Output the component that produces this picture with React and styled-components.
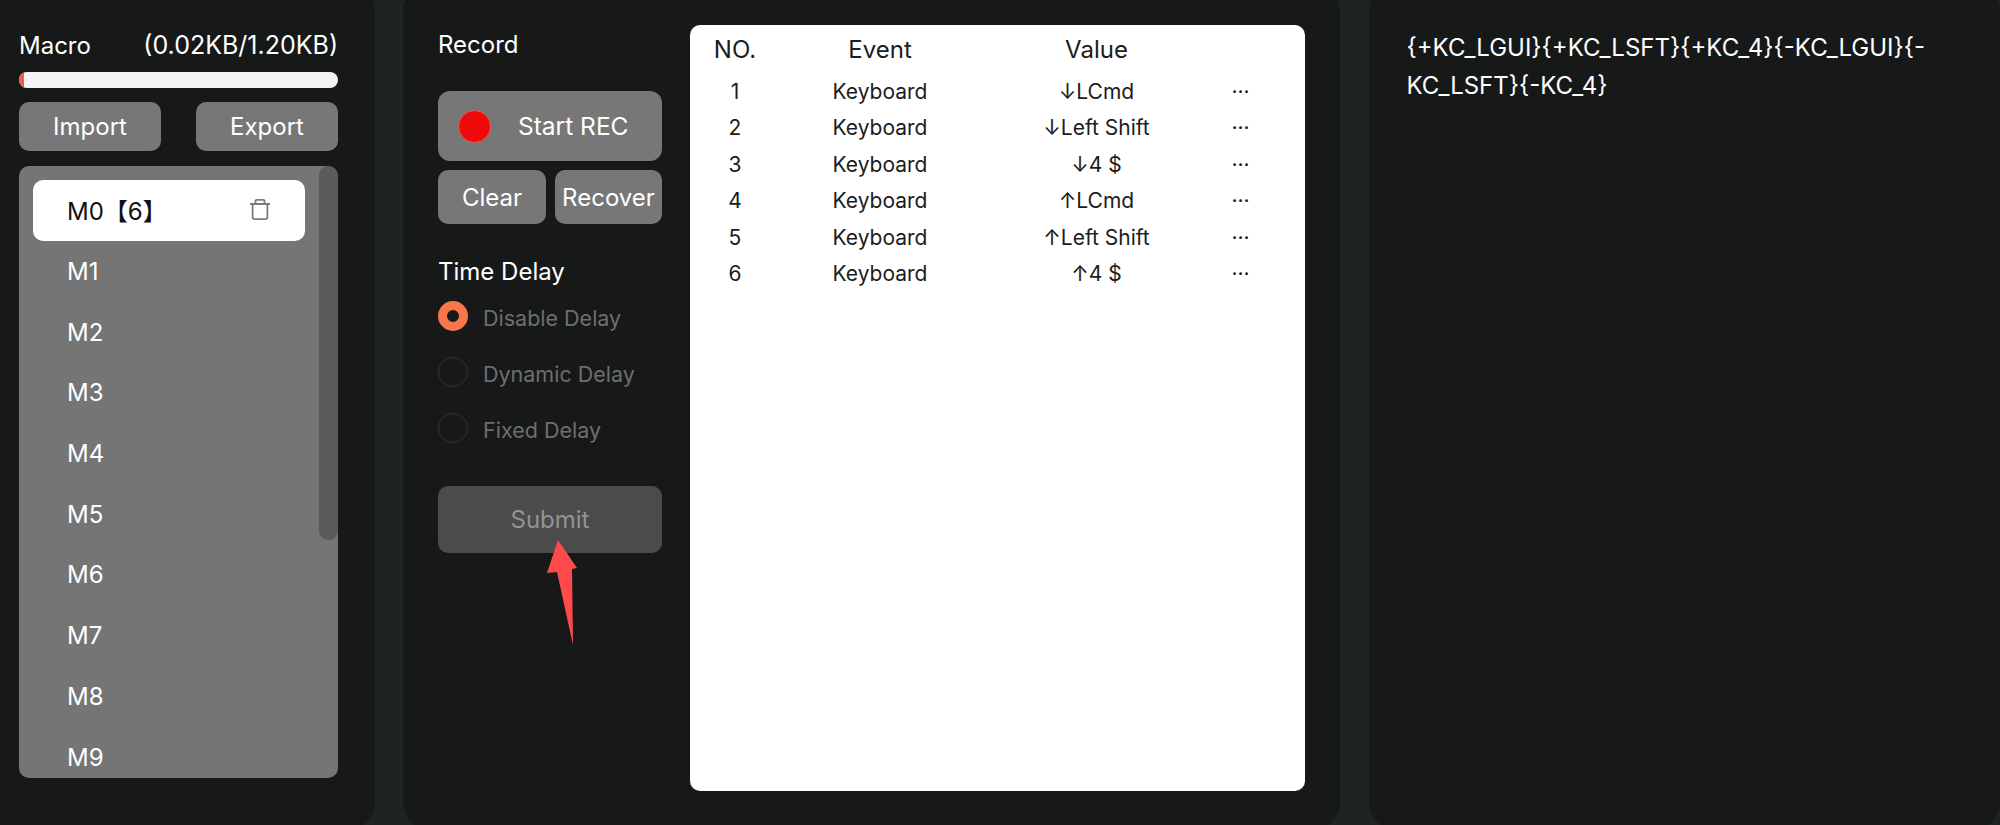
import React from "react";
import styled, { createGlobalStyle } from "styled-components";

const Global = createGlobalStyle`
  html, body { margin: 0; padding: 0; background: #1f2324; }
  body { font-family: Inter, "Noto Sans CJK SC", "Liberation Sans", sans-serif; }
  * { box-sizing: border-box; }
`;

const Page = styled.div`
  display: grid;
  grid-template-columns: 375px 937px 631px;
  column-gap: 28px;
  width: 2000px;
  height: 825px;
  overflow: hidden;
  background: #1f2324;
`;

const Panel = styled.section`
  height: 846px;
  margin-top: -16px;
  background: #171919;
  border-radius: 28px;
`;

const MacroPanel = styled(Panel)`
  display: flex;
  flex-direction: column;
  padding: 47px 37px 0 19px;
  border-top-left-radius: 0;
  border-bottom-left-radius: 0;
`;

const RecordPanel = styled(Panel)`
  display: flex;
  gap: 28px;
  padding: 41px 35px 0 35px;
`;

const OutputPanel = styled(Panel)`
  width: 631px;
  margin-left: 1px;
  padding: 45px 40px 0 37.5px;
  color: #fff;
  font-size: 24px;
  line-height: 37.5px;
`;

const Head = styled.div`
  display: flex;
  justify-content: space-between;
  align-items: baseline;
  height: 28px;
  line-height: 28px;
  font-size: 24px;
  color: #fff;
`;

const Usage = styled.span`
  font-size: 25px;
`;

const Bar = styled.div`
  flex: none;
  height: 15.5px;
  margin-top: 13px;
  background: #f4f4f4;
  border-radius: 8px;
  overflow: hidden;
`;

const BarFill = styled.div`
  height: 100%;
  background: #ea5f4b;
`;

const ButtonRow = styled.div`
  display: flex;
  justify-content: space-between;
  margin-top: 14.5px;
`;

const Button = styled.button`
  display: flex;
  align-items: center;
  justify-content: center;
  width: ${(p) => p.$w || "142px"};
  height: ${(p) => p.$h || "49px"};
  padding: 0;
  border: 0;
  border-radius: 10px;
  background: #777;
  color: #fff;
  font: 400 24px Inter, sans-serif;
`;

const List = styled.div`
  position: relative;
  flex: none;
  height: 612px;
  margin-top: 15px;
  padding-top: 14px;
  background: #757575;
  border-radius: 10px;
  overflow: hidden;
`;

const Scroll = styled.div`
  position: absolute;
  top: 0;
  right: 0;
  width: 19px;
  height: 374px;
  background: #5b5b5b;
  border-radius: 9px;
`;

const Item = styled.div`
  display: flex;
  align-items: center;
  justify-content: space-between;
  width: 272px;
  height: 60.7px;
  margin-left: 14px;
  padding: ${(p) => (p.$active ? "0 35px 2px 34px" : "1px 35px 0 34px")};
  border-radius: 10px;
  font-size: 24px;
  background: ${(p) => (p.$active ? "#fff" : "transparent")};
  color: ${(p) => (p.$active ? "#111" : "#fff")};
`;

const Controls = styled.div`
  flex: none;
  width: 224px;
  padding-top: 6px;
`;

const Heading = styled.div`
  height: 28px;
  line-height: 28px;
  font-size: 24px;
  color: #fff;
  margin-top: ${(p) => p.$mt || 0};
`;

const RecButton = styled(Button)`
  justify-content: flex-start;
  margin-top: 32px;
  padding-left: 20px;
  gap: 27px;
  border-radius: 12px;
  font-size: 24.5px;
`;

const RecDot = styled.span`
  width: 33px;
  height: 33px;
  border-radius: 50%;
  background: #ee0a0a;
  border: 1px solid #d8625c;
`;

const SplitRow = styled.div`
  display: flex;
  justify-content: space-between;
  margin-top: 9px;
`;

const Radios = styled.div`
  display: flex;
  flex-direction: column;
  gap: 26px;
  margin-top: 15px;
`;

const RadioRow = styled.label`
  display: flex;
  align-items: center;
  gap: 15px;
  height: 30px;
  font-size: 21.5px;
  color: #6e6e6e;
`;

const RadioMark = styled.span`
  flex: none;
  width: 30px;
  height: 30px;
  border-radius: 50%;
  border: ${(p) => (p.$on ? "9px solid #f9754c" : "1px solid #333")};
  background: ${(p) => (p.$on ? "#171919" : "transparent")};
`;

const RadioText = styled.span`
  padding-top: 4px;
`;

const SubmitWrap = styled.div`
  position: relative;
  margin-top: 43px;
`;

const Submit = styled(Button)`
  background: #4b4b4b;
  color: #939393;
  border-radius: 10px;
`;

const Arrow = styled.svg`
  position: absolute;
  left: 109px;
  top: 54px;
`;

const Table = styled.div`
  flex: none;
  width: 615px;
  height: 766px;
  background: #fff;
  border-radius: 10px;
  color: #1c1c1c;
`;

const Row = styled.div`
  display: grid;
  grid-template-columns: 90px 200px 233px 55px;
  align-items: center;
  justify-items: center;
  height: ${(p) => (p.$head ? "48px" : "36.5px")};
  font-size: ${(p) => (p.$head ? "24px" : "21px")};
`;

const Trash = () => (
  <svg width="20" height="21" viewBox="0 0 20 21" fill="none" stroke="#7c7c7c" strokeWidth="1.8">
    <path d="M5.5 5V2Q5.5 .9 6.7 .9H13.3Q14.5 .9 14.5 2V5" />
    <path d="M0 5H20" />
    <path d="M2.6 5V18Q2.6 20.1 4.8 20.1H15.2Q17.4 20.1 17.4 18V5" />
  </svg>
);

const rows = ["↓LCmd", "↓Left Shift", "↓4 $", "↑LCmd", "↑Left Shift", "↑4 $"];

export default function App() {
  return (
    <>
      <Global />
      <Page>
        <MacroPanel>
          <Head>
            <span>Macro</span>
            <Usage>(0.02KB/1.20KB)</Usage>
          </Head>
          <Bar>
            <BarFill style={{ width: `${(0.02 / 1.2) * 100}%` }} />
          </Bar>
          <ButtonRow>
            <Button>Import</Button>
            <Button>Export</Button>
          </ButtonRow>
          <List>
            <Item $active>
              <span>M0【6】</span>
              <Trash />
            </Item>
            {[1, 2, 3, 4, 5, 6, 7, 8, 9].map((n) => (
              <Item key={n}>M{n}</Item>
            ))}
            <Scroll />
          </List>
        </MacroPanel>
        <RecordPanel>
          <Controls>
            <Heading>Record</Heading>
            <RecButton $w="224px" $h="70px">
              <RecDot />
              Start REC
            </RecButton>
            <SplitRow>
              <Button $w="108px" $h="54px">Clear</Button>
              <Button $w="107px" $h="54px">Recover</Button>
            </SplitRow>
            <Heading $mt="34px">Time Delay</Heading>
            <Radios>
              <RadioRow><RadioMark $on /><RadioText>Disable Delay</RadioText></RadioRow>
              <RadioRow><RadioMark /><RadioText>Dynamic Delay</RadioText></RadioRow>
              <RadioRow><RadioMark /><RadioText>Fixed Delay</RadioText></RadioRow>
            </Radios>
            <SubmitWrap>
              <Submit $w="224px" $h="67px">Submit</Submit>
              <Arrow width="30" height="105" viewBox="0 0 30 105">
                <path d="M11 0L30 28L25 29L26 105L10 32L0 33Z" fill="#ff4a4a" />
              </Arrow>
            </SubmitWrap>
          </Controls>
          <Table>
            <Row $head>
              <span>NO.</span>
              <span>Event</span>
              <span>Value</span>
              <span />
            </Row>
            {rows.map((v, i) => (
              <Row key={i}>
                <span>{i + 1}</span>
                <span>Keyboard</span>
                <span>{v}</span>
                <span>···</span>
              </Row>
            ))}
          </Table>
        </RecordPanel>
        <OutputPanel>
          {"{+KC_LGUI}{+KC_LSFT}{+KC_4}{-KC_LGUI}{-KC_LSFT}{-KC_4}"}
        </OutputPanel>
      </Page>
    </>
  );
}
